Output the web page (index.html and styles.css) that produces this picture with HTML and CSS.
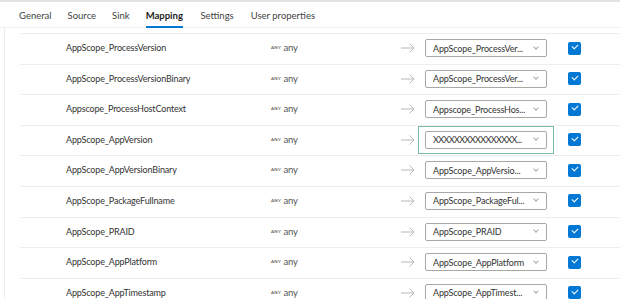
FILE: index.html
```html
<!DOCTYPE html>
<html lang="en">
<head>
    <meta charset="UTF-8">
    <title>Mapping</title>
    <link rel="stylesheet" href="styles.css">
</head>
<body>
    <div class="panel">
        <div class="tabs">
            <span class="tab">General</span>
            <span class="tab">Source</span>
            <span class="tab">Sink</span>
            <span class="tab active">Mapping</span>
            <span class="tab">Settings</span>
            <span class="tab">User properties</span>
        </div>

        <div class="mapping">
            <div class="row">
                <span class="name">AppScope_ProcessVersion</span>
                <span class="type"><small>ANY</small> any</span>
                <svg class="arrow" width="14" height="10" viewBox="0 0 14 10"><path d="M0 5h13M8.5 0.5L13 5l-4.5 4.5" fill="none" stroke="#b8b8b8" stroke-width="1"/></svg>
                <div class="target"><div class="select"><span>AppScope_ProcessVer...</span><i class="chev"></i></div></div>
                <span class="check"></span>
            </div>
            <div class="row">
                <span class="name">AppScope_ProcessVersionBinary</span>
                <span class="type"><small>ANY</small> any</span>
                <svg class="arrow" width="14" height="10" viewBox="0 0 14 10"><path d="M0 5h13M8.5 0.5L13 5l-4.5 4.5" fill="none" stroke="#b8b8b8" stroke-width="1"/></svg>
                <div class="target"><div class="select"><span>AppScope_ProcessVer...</span><i class="chev"></i></div></div>
                <span class="check"></span>
            </div>
            <div class="row">
                <span class="name">Appscope_ProcessHostContext</span>
                <span class="type"><small>ANY</small> any</span>
                <svg class="arrow" width="14" height="10" viewBox="0 0 14 10"><path d="M0 5h13M8.5 0.5L13 5l-4.5 4.5" fill="none" stroke="#b8b8b8" stroke-width="1"/></svg>
                <div class="target"><div class="select"><span>Appscope_ProcessHos...</span><i class="chev"></i></div></div>
                <span class="check"></span>
            </div>
            <div class="row">
                <span class="name">AppScope_AppVersion</span>
                <span class="type"><small>ANY</small> any</span>
                <svg class="arrow" width="14" height="10" viewBox="0 0 14 10"><path d="M0 5h13M8.5 0.5L13 5l-4.5 4.5" fill="none" stroke="#b8b8b8" stroke-width="1"/></svg>
                <div class="target focused"><div class="select"><span class="xs">XXXXXXXXXXXXXXXX...</span><i class="chev"></i></div></div>
                <span class="check"></span>
            </div>
            <div class="row">
                <span class="name">AppScope_AppVersionBinary</span>
                <span class="type"><small>ANY</small> any</span>
                <svg class="arrow" width="14" height="10" viewBox="0 0 14 10"><path d="M0 5h13M8.5 0.5L13 5l-4.5 4.5" fill="none" stroke="#b8b8b8" stroke-width="1"/></svg>
                <div class="target"><div class="select"><span>AppScope_AppVersio...</span><i class="chev"></i></div></div>
                <span class="check"></span>
            </div>
            <div class="row">
                <span class="name">AppScope_PackageFullname</span>
                <span class="type"><small>ANY</small> any</span>
                <svg class="arrow" width="14" height="10" viewBox="0 0 14 10"><path d="M0 5h13M8.5 0.5L13 5l-4.5 4.5" fill="none" stroke="#b8b8b8" stroke-width="1"/></svg>
                <div class="target"><div class="select"><span>AppScope_PackageFul...</span><i class="chev"></i></div></div>
                <span class="check"></span>
            </div>
            <div class="row">
                <span class="name">AppScope_PRAID</span>
                <span class="type"><small>ANY</small> any</span>
                <svg class="arrow" width="14" height="10" viewBox="0 0 14 10"><path d="M0 5h13M8.5 0.5L13 5l-4.5 4.5" fill="none" stroke="#b8b8b8" stroke-width="1"/></svg>
                <div class="target"><div class="select"><span>AppScope_PRAID</span><i class="chev"></i></div></div>
                <span class="check"></span>
            </div>
            <div class="row">
                <span class="name">AppScope_AppPlatform</span>
                <span class="type"><small>ANY</small> any</span>
                <svg class="arrow" width="14" height="10" viewBox="0 0 14 10"><path d="M0 5h13M8.5 0.5L13 5l-4.5 4.5" fill="none" stroke="#b8b8b8" stroke-width="1"/></svg>
                <div class="target"><div class="select"><span>AppScope_AppPlatform</span><i class="chev"></i></div></div>
                <span class="check"></span>
            </div>
            <div class="row">
                <span class="name">AppScope_AppTimestamp</span>
                <span class="type"><small>ANY</small> any</span>
                <svg class="arrow" width="14" height="10" viewBox="0 0 14 10"><path d="M0 5h13M8.5 0.5L13 5l-4.5 4.5" fill="none" stroke="#b8b8b8" stroke-width="1"/></svg>
                <div class="target"><div class="select"><span>AppScope_AppTimest...</span><i class="chev"></i></div></div>
                <span class="check"></span>
            </div>
        </div>
    </div>
</body>
</html>
```

FILE: styles.css
```css
* {
    margin: 0;
    padding: 0;
    box-sizing: border-box;
}
body {
    background: #fff;
    font-family: 'Lato', 'Noto Sans', sans-serif;
    color: #333;
    overflow: hidden;
}
.panel {
    border-top: 2px solid #e3e3e3;
}
.tabs {
    display: flex;
    align-items: center;
    height: 26px;
    padding-left: 19px;
    border-bottom: 1px solid #f0f0f0;
}
.tab {
    font-size: 9.5px;
    color: #444;
    margin-right: 16px;
    height: 26px;
    line-height: 28px;
}
.tab.active {
    font-weight: bold;
    color: #222;
    margin-right: 17.5px;
    border-bottom: 2px solid #0078d4;
}
.tab.active + .tab {
    margin-right: 17px;
}
.mapping {
    margin-left: 4px;
    padding-left: 15px;
    padding-top: 5px;
    border-left: 1px solid #ececec;
}
.row {
    display: grid;
    grid-template-columns: 46px 205px 130px 17px 150px 13px;
    align-items: center;
    height: 30.6px;
    padding-bottom: 4px;
    border-top: 1px solid #ededed;
    font-size: 9px;
    letter-spacing: -0.15px;
}
.name {
    grid-column: 2;
    color: #333;
    margin-top: -1px;
}
.type {
    color: #555;
    margin-top: -1px;
    font-size: 9.5px;
}
.type small {
    font-size: 4.5px;
    font-weight: bold;
    color: #666;
    vertical-align: 2px;
    letter-spacing: 0.2px;
}
.arrow {
    display: block;
}
.target {
    border: 1px solid transparent;
    padding: 4px 5px 4px 6px;
    width: 136px;
}
.target.focused {
    border-color: #7dbda4;
}
.select {
    display: flex;
    align-items: center;
    justify-content: space-between;
    height: 18px;
    width: 122px;
    padding: 0 8px 0 7px;
    border: 1px solid #a8a8a8;
    border-radius: 2px;
    color: #333;
    white-space: nowrap;
    overflow: hidden;
}
.select .xs {
    letter-spacing: -0.6px;
}
.chev {
    flex: none;
    width: 4px;
    height: 4px;
    border-right: 1px solid #aaa;
    border-bottom: 1px solid #aaa;
    transform: rotate(45deg);
    margin-top: -3px;
}
.check {
    display: block;
    width: 13px;
    height: 13px;
    border-radius: 2px;
    background: #0078d4;
    position: relative;
}
.check::after {
    content: '';
    position: absolute;
    left: 4px;
    top: 2.5px;
    width: 5px;
    height: 3px;
    border-left: 1.5px solid #fff;
    border-bottom: 1.5px solid #fff;
    transform: rotate(-45deg);
}
```
